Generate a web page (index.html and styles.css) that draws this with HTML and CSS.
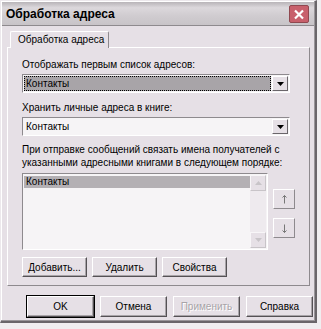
FILE: index.html
```html
<!DOCTYPE html>
<html lang="ru">
<head>
<meta charset="utf-8">
<link rel="stylesheet" href="styles.css">
</head>
<body>
<div class="window">
  <div class="titlebar">
    <span class="title">Обработка адреса</span>
    <span class="close">
      <svg width="12" height="11" viewBox="0 0 12 11"><path d="M2 1.5 L10 9.5 M10 1.5 L2 9.5" stroke="#fff" stroke-width="2.2" fill="none"/></svg>
    </span>
  </div>
  <div class="tabs">
    <div class="tab">Обработка адреса</div>
  </div>
  <div class="panel">
    <div class="label">Отображать первым список адресов:</div>
    <div class="combo">
      <div class="combo-value selected"><span>Контакты</span></div>
      <div class="combo-btn"><svg width="7" height="4" viewBox="0 0 7 4"><path d="M0 0 H7 L3.5 4 Z" fill="#000"/></svg></div>
    </div>
    <div class="label second">Хранить личные адреса в книге:</div>
    <div class="combo">
      <div class="combo-value"><span>Контакты</span></div>
      <div class="combo-btn"><svg width="7" height="4" viewBox="0 0 7 4"><path d="M0 0 H7 L3.5 4 Z" fill="#000"/></svg></div>
    </div>
    <div class="label third">При отправке сообщений связать имена получателей с<br>указанными адресными книгами в следующем порядке:</div>
    <div class="listrow">
      <div class="listbox">
        <div class="items">
          <div class="item sel">Контакты</div>
        </div>
        <div class="scrollbar">
          <div class="sb-btn"><svg width="7" height="4" viewBox="0 0 7 4"><path d="M0 4 H7 L3.5 0 Z" fill="#c8c4c8"/></svg></div>
          <div class="sb-track"></div>
          <div class="sb-btn"><svg width="7" height="4" viewBox="0 0 7 4"><path d="M0 0 H7 L3.5 4 Z" fill="#c8c4c8"/></svg></div>
        </div>
      </div>
      <div class="updown">
        <div class="ud-btn"><svg width="5" height="9" viewBox="0 0 5 9"><path d="M2.5 0.5 V8.5 M0.5 2.5 L2.5 0.5 L4.5 2.5" stroke="#777" fill="none"/></svg></div>
        <div class="ud-btn"><svg width="5" height="9" viewBox="0 0 5 9"><path d="M2.5 0.5 V8.5 M0.5 6.5 L2.5 8.5 L4.5 6.5" stroke="#777" fill="none"/></svg></div>
      </div>
    </div>
    <div class="btnrow">
      <div class="btn">Добавить...</div>
      <div class="btn">Удалить</div>
      <div class="btn">Свойства</div>
    </div>
  </div>
  <div class="footer">
    <div class="btn wide default">OK</div>
    <div class="btn wide">Отмена</div>
    <div class="btn wide disabled">Применить</div>
    <div class="btn wide">Справка</div>
  </div>
</div>
</body>
</html>
```
FILE: styles.css
```css
html, body {
  margin: 0;
  padding: 0;
  background: #f0eef0;
}
body {
  font-family: "Liberation Sans", Arial, sans-serif;
  font-size: 10px;
  color: #000;
}
.window {
  width: 314px;
  height: 320px;
  background: #e6e0e6;
  border-top: 1px solid #ece8ec;
  border-left: 1px solid #ece8ec;
  border-right: 2px solid #6a666a;
  border-bottom: 2px solid #6a666a;
  box-shadow: inset -1px -1px 0 #9a969a, inset 1px 1px 0 #fff;
  display: flex;
  flex-direction: column;
}
.titlebar {
  height: 23px;
  margin: 1px 1px 0 1px;
  background: linear-gradient(#b8b4b8 0, #dcd8dc 25%, #d0ccd0 60%, #c8c4c8 100%);
  display: flex;
  align-items: center;
  justify-content: space-between;
  padding: 0 5px 0 4px;
  border-bottom: 1px solid #8e8a8e;
}
.title {
  font-weight: bold;
  font-size: 12px;
}
.close {
  width: 18px;
  height: 16px;
  background: #c8606c;
  border: 1px solid #904850;
  border-radius: 2px;
  display: flex;
  align-items: center;
  justify-content: center;
  margin-top: 1px;
}
.tabs {
  display: flex;
  padding: 5px 0 0 9px;
}
.tab {
  width: 90px;
  height: 16px;
  border: 1px solid #fff;
  border-right: 1px solid #8e8a8e;
  border-bottom: none;
  border-radius: 2px 2px 0 0;
  padding-left: 7px;
  line-height: 16px;
  white-space: nowrap;
  background: #e6e0e6;
  position: relative;
  z-index: 1;
  margin-bottom: -1px;
}
.panel {
  margin: 0 5px 0 6px;
  height: 239px;
  border: 1px solid #fff;
  border-right: 1px solid #8e8a8e;
  border-bottom: 1px solid #8e8a8e;
  padding: 10px 0 0 14px;
  box-sizing: border-box;
  display: flex;
  flex-direction: column;
}
.label {
  line-height: 13px;
  height: 13px;
  white-space: nowrap;
}
.label.second { margin-top: 8px; }
.label.third {
  margin-top: 7px;
  height: auto;
}
.combo {
  margin-top: 3px;
  width: 268px;
  height: 19px;
  box-sizing: border-box;
  border: 1px solid #8e8a8e;
  border-right-color: #fff;
  border-bottom-color: #fff;
  background: #f6f4f6;
  display: flex;
  padding: 1px;
}
.combo-value {
  flex: 1;
  display: flex;
  align-items: center;
  padding-left: 1px;
}
.combo-value span {
  display: block;
  line-height: 13px;
  padding-left: 1px;
}
.combo-value.selected {
  background: #a8a4a8;
  outline: 1px dotted #000;
  outline-offset: -1px;
  margin-right: 1px;
}
.combo-btn {
  width: 16px;
  background: #e6e0e6;
  border: 1px solid #fff;
  border-right-color: #6a666a;
  border-bottom-color: #6a666a;
  box-sizing: border-box;
  display: flex;
  align-items: center;
  justify-content: center;
}
.listrow {
  margin-top: 4px;
  display: flex;
  gap: 5px;
}
.listbox {
  width: 246px;
  height: 77px;
  box-sizing: border-box;
  border: 1px solid #8e8a8e;
  border-right-color: #fff;
  border-bottom-color: #fff;
  background: #f6f4f6;
  display: flex;
  padding: 1px;
}
.items {
  flex: 1;
  padding-top: 1px;
}
.item {
  line-height: 12px;
  padding-left: 2px;
}
.item.sel {
  background: #b4b0b4;
}
.scrollbar {
  width: 16px;
  display: flex;
  flex-direction: column;
  background: #eeeaee;
}
.sb-btn {
  height: 16px;
  box-sizing: border-box;
  border: 1px solid #f8f6f8;
  border-right-color: #c8c4c8;
  border-bottom-color: #c8c4c8;
  background: #e6e0e6;
  display: flex;
  align-items: center;
  justify-content: center;
}
.sb-track { flex: 1; }
.updown {
  display: flex;
  flex-direction: column;
  gap: 9px;
  padding-top: 16px;
}
.ud-btn {
  width: 22px;
  height: 20px;
  box-sizing: border-box;
  border: 1px solid #fff;
  border-right-color: #8e8a8e;
  border-bottom-color: #8e8a8e;
  display: flex;
  align-items: center;
  justify-content: center;
}
.btnrow {
  margin-top: 7px;
  display: flex;
  gap: 5px;
}
.btn {
  width: 65px;
  height: 20px;
  box-sizing: border-box;
  border: 1px solid #fff;
  border-right-color: #555155;
  border-bottom-color: #555155;
  box-shadow: inset -1px -1px 0 #a8a4a8;
  display: flex;
  align-items: center;
  justify-content: center;
  line-height: 13px;
}
.footer {
  display: flex;
  gap: 6px;
  padding: 10px 0 0 26px;
}
.btn.wide {
  width: 67px;
  height: 21px;
}
.btn.default {
  outline: 1px solid #000;
  outline-offset: 0;
}
.btn.disabled {
  color: #a8a4a8;
  text-shadow: 1px 1px 0 #fff;
}
```
